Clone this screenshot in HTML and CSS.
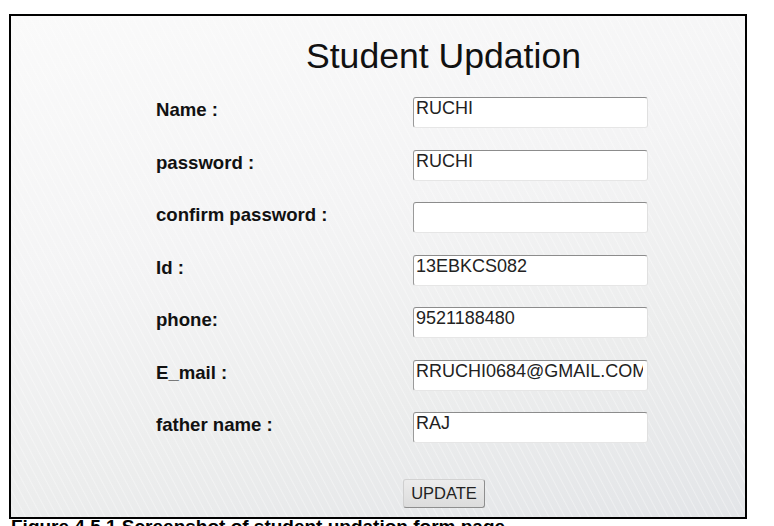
FILE: index.html
```html
<!DOCTYPE html>
<html>
<head>
<meta charset="utf-8">
<title>Student Updation</title>
<link rel="stylesheet" href="styles.css">
</head>
<body>
<div class="page">
  <div class="frame">
    <h1 class="title">Student Updation</h1>
    <form class="form">
      <label class="lbl">Name :</label><input class="field" type="text" value="RUCHI">
      <label class="lbl">password :</label><input class="field" type="text" value="RUCHI">
      <label class="lbl">confirm password :</label><input class="field" type="text" value="">
      <label class="lbl">Id :</label><input class="field" type="text" value="13EBKCS082">
      <label class="lbl">phone:</label><input class="field" type="text" value="9521188480">
      <label class="lbl">E_mail :</label><input class="field" type="text" value="RRUCHI0684@GMAIL.COM">
      <label class="lbl">father name :</label><input class="field" type="text" value="RAJ">
      <div class="actions"><button class="btn" type="button">UPDATE</button></div>
    </form>
  </div>
  <p class="caption">Figure 4.5.1 Screenshot of student updation form page</p>
</div>
</body>
</html>
```
FILE: styles.css
```css
html, body {
  margin: 0;
  background: #fff;
  font-family: "Liberation Sans", Arial, sans-serif;
  overflow: hidden;
}
.page {
  padding: 14px 0 0 9px;
}
.frame {
  width: 738px;
  height: 505px;
  box-sizing: border-box;
  border: 2px solid #000;
  padding-top: 20px;
  background:
    repeating-linear-gradient(62deg, rgba(255,255,255,0) 0px, rgba(255,255,255,0) 5px, rgba(255,255,255,0.35) 6px, rgba(255,255,255,0) 7px),
    linear-gradient(165deg, #fafafa 0%, #f4f4f5 40%, #eceded 70%, #e3e5e8 100%);
}
.title {
  margin: 0 0 0 295px;
  font-size: 35.6px;
  font-weight: normal;
  line-height: 40px;
  color: #111;
}
.form {
  margin: 21px 0 0 0;
  padding-left: 145px;
  display: grid;
  grid-template-columns: 257px 235px;
  grid-auto-rows: 31px;
  row-gap: 21.5px;
}
.lbl {
  margin-top: 3px;
  font-size: 18.6px;
  font-weight: bold;
  line-height: 20px;
  color: #111;
}
.field {
  width: 235px;
  height: 31px;
  box-sizing: border-box;
  margin: 0;
  padding: 0 4px 8px 2px;
  font-family: "Liberation Sans", Arial, sans-serif;
  font-size: 18px;
  color: #222;
  background: #fff;
  border: 1px solid;
  border-color: #8c8c8c #e0e0e0 #e6e6e6 #9a9a9a;
  border-radius: 3px;
  outline: none;
}
.actions {
  grid-column: 1 / 3;
  padding-left: 247px;
  margin-top: 14.5px;
}
.btn {
  width: 82px;
  height: 29px;
  padding: 0;
  font-family: "Liberation Sans", Arial, sans-serif;
  font-size: 16.5px;
  color: #222;
  background: linear-gradient(#ececec, #dcdcdc);
  border: 1px solid;
  border-color: #d2d2d2 #8e8e8e #8e8e8e #cfcfcf;
  border-radius: 3px;
}
.caption {
  margin: 0;
  padding-left: 2px;
  font-size: 19px;
  font-weight: bold;
  line-height: 16px;
  color: #000;
}
```
